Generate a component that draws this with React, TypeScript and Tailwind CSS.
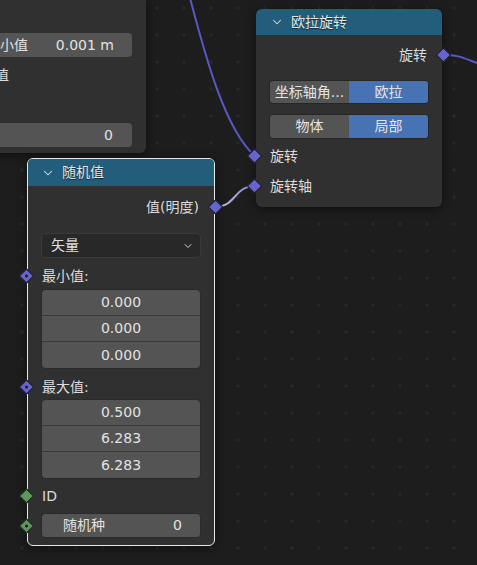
import { ChevronDown } from 'lucide-react';
import type { ReactNode } from 'react';

const font = { fontFamily: '"DejaVu Sans", "Noto Sans CJK SC", sans-serif' };

function Socket({ side, color = 'purple', dot = false }: { side: 'left' | 'right'; color?: 'purple' | 'green'; dot?: boolean }) {
  return (
    <span
      className={
        'absolute top-1/2 -translate-y-1/2 w-[11px] h-[11px] rotate-45 border border-[#141414] flex items-center justify-center z-20 ' +
        (side === 'left' ? 'left-[-7px] ' : 'right-[-7px] ') +
        (color === 'purple' ? 'bg-[#6565cd]' : 'bg-[#5c955e]')
      }
    >
      {dot && <span className="w-[3px] h-[3px] rounded-full bg-[#1a1a1a]" />}
    </span>
  );
}

function Row({ children, className = '' }: { children: ReactNode; className?: string }) {
  return <div className={'relative h-[22px] flex items-center text-[14px] text-[#dcdcdc] ' + className}>{children}</div>;
}

function Header({ title, h, pl, round }: { title: string; h: string; pl: string; round: string }) {
  return (
    <div className={'flex items-center gap-[7px] bg-[#225e7c] text-[14px] text-[#e4e4e4] [text-shadow:0_1px_1px_rgba(0,0,0,0.6)] ' + h + ' ' + pl + ' ' + round}>
      <ChevronDown size={14} strokeWidth={1.75} className="text-[#dddddd]" />
      <span>{title}</span>
    </div>
  );
}

function VecBox({ values }: { values: string[] }) {
  return (
    <div className="rounded-[5px] border border-[#2a2a2a] overflow-hidden divide-y divide-[#3a3a3a]">
      {values.map((v, i) => (
        <div key={i} className="h-[26px] bg-[#545454] flex items-center justify-center text-[14px] text-[#e2e2e2]">
          {v}
        </div>
      ))}
    </div>
  );
}

export default function App() {
  return (
    <div
      style={font}
      className="relative w-[477px] h-[565px] overflow-hidden bg-[#1d1d1d] bg-[radial-gradient(circle,#2a2a2a_1.2px,transparent_1.7px)] bg-[length:27px_27px] bg-[position:8.5px_-5.5px]"
    >
      {/* links */}
      <svg className="absolute inset-0 z-0" width="477" height="565" viewBox="0 0 477 565">
        <defs>
          <linearGradient id="lk" x1="0" y1="0" x2="1" y2="0">
            <stop offset="0" stopColor="#c8c8d8" />
            <stop offset="1" stopColor="#8080d0" />
          </linearGradient>
        </defs>
        <path d="M190 -2 C205 55, 225 130, 255 156" fill="none" stroke="#5858c4" strokeWidth="2" />
        <path d="M215 207 C236 207, 234 186, 255 186" fill="none" stroke="url(#lk)" strokeWidth="2" />
        <path d="M443 55 C460 55, 463 58, 480 64" fill="none" stroke="#5858c4" strokeWidth="2" />
      </svg>

      {/* partial node top-left */}
      <div className="absolute left-[-47px] top-0 w-[193px] z-10 bg-[#303030] rounded-br-[6px] shadow-[0_2px_10px_rgba(0,0,0,0.5)] pt-[33px] pb-[6px]">
        <div className="mx-[14px] h-[24px] rounded-[4px] bg-[#545454] flex items-center justify-between pl-[19px] pr-[18px] text-[14px] text-[#e2e2e2]">
          <span>最小值</span>
          <span>0.001 m</span>
        </div>
        <Row className="mt-[7px] pl-[14px]">最大值</Row>
        <div className="mt-[37px] mx-[14px] h-[24px] rounded-[4px] bg-[#545454] flex items-center justify-end pr-[19px] text-[14px] text-[#e2e2e2]">
          <span>0</span>
        </div>
      </div>

      {/* 欧拉旋转 */}
      <div className="absolute left-[256px] top-[9px] w-[186px] z-10 bg-[#303030] rounded-[6px] shadow-[0_2px_10px_rgba(0,0,0,0.5)]">
        <Header title="欧拉旋转" h="h-[26px]" pl="pl-[14px]" round="rounded-t-[6px]" />
        <div className="pt-[9px] pb-[10px]">
          <Row className="justify-end pr-[15px]">
            旋转
            <Socket side="right" />
          </Row>
          <div className="mt-[14px] mx-[13px] h-[24px] flex rounded-[4px] overflow-hidden border border-[#262626] text-[14px] text-[#e4e4e4]">
            <div className="w-[79px] bg-[#545454] flex items-center justify-center">坐标轴角...</div>
            <div className="flex-1 bg-[#4772b3] flex items-center justify-center">欧拉</div>
          </div>
          <div className="mt-[10px] mx-[13px] h-[25px] flex rounded-[4px] overflow-hidden border border-[#262626] text-[14px] text-[#e4e4e4]">
            <div className="w-[79px] bg-[#545454] flex items-center justify-center">物体</div>
            <div className="flex-1 bg-[#4772b3] flex items-center justify-center">局部</div>
          </div>
          <Row className="mt-[6px] pl-[14px]">
            <Socket side="left" />
            旋转
          </Row>
          <Row className="mt-[8px] pl-[14px]">
            <Socket side="left" />
            旋转轴
          </Row>
        </div>
      </div>

      {/* 随机值 */}
      <div className="absolute left-[27px] top-[158px] w-[188px] z-10 bg-[#303030] rounded-[6px] border border-[#e8e8e8] shadow-[0_2px_10px_rgba(0,0,0,0.5)]">
        <Header title="随机值" h="h-[27px]" pl="pl-[13px]" round="rounded-t-[5px]" />
        <div className="pt-[10px] pb-[7px]">
          <Row className="justify-end pr-[15px]">
            值(明度)
            <Socket side="right" />
          </Row>
          <div className="mt-[15px] mx-[13px] h-[25px] rounded-[4px] bg-[#282828] border border-[#3a3a3a] flex items-center justify-between pl-[9px] pr-[6px] text-[14px] text-[#e0e0e0]">
            <span>矢量</span>
            <ChevronDown size={12} strokeWidth={2} className="text-[#d0d0d0]" />
          </div>
          <Row className="mt-[7px] pl-[14px]">
            <Socket side="left" dot />
            最小值:
          </Row>
          <div className="mt-[2px] mx-[13px]">
            <VecBox values={['0.000', '0.000', '0.000']} />
          </div>
          <Row className="mt-[7px] pl-[14px]">
            <Socket side="left" dot />
            最大值:
          </Row>
          <div className="mt-[1px] mx-[13px]">
            <VecBox values={['0.500', '6.283', '6.283']} />
          </div>
          <Row className="mt-[6px] pl-[14px]">
            <Socket side="left" color="green" />
            ID
          </Row>
          <div className="relative mt-[6px] mx-[13px] h-[25px] rounded-[4px] bg-[#545454] border border-[#2a2a2a] flex items-center justify-between pl-[21px] pr-[18px] text-[14px] text-[#e2e2e2]">
            <span className="absolute left-[-14px] top-1/2 -translate-y-1/2 w-0 h-0">
              <Socket side="left" color="green" dot />
            </span>
            <span>随机种</span>
            <span>0</span>
          </div>
        </div>
      </div>
    </div>
  );
}
